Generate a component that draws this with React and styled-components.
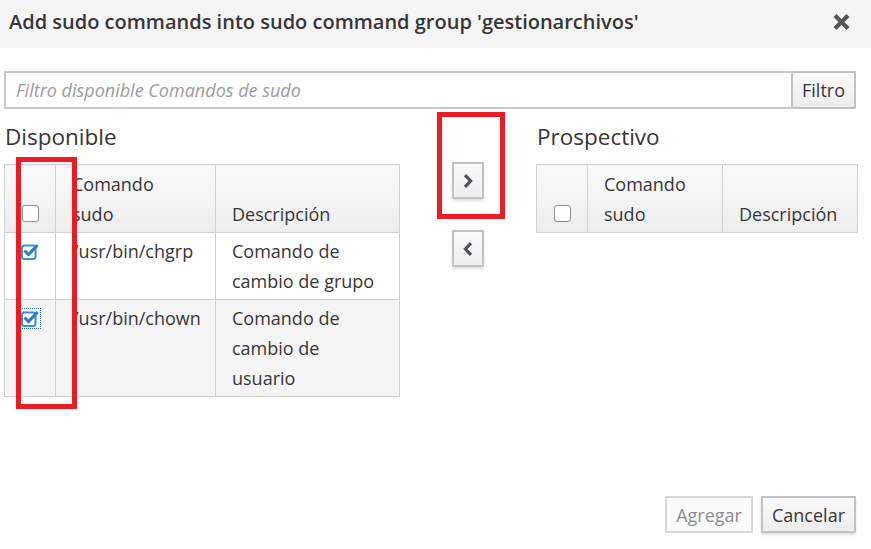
import React from "react";
import styled, { createGlobalStyle } from "styled-components";

const Global = createGlobalStyle`
  html, body { margin: 0; padding: 0; background: #fff; }
  body { font-family: "Open Sans", "Noto Sans", sans-serif; color: #363636; }
  * { box-sizing: border-box; }
`;

const Page = styled.div`
  position: relative;
  width: 871px;
  height: 549px;
  overflow: hidden;
`;

const Header = styled.div`
  height: 48px;
  background: #f5f5f5;
  display: flex;
  align-items: center;
  justify-content: space-between;
  padding: 0 20px 0 9px;
`;

const Title = styled.h4`
  margin: 0;
  font-size: 20px;
  font-weight: 600;
  color: #363636;
  line-height: 26px;
  margin-top: -4px;
`;

const Close = styled.button`
  border: 0;
  background: none;
  padding: 0;
  width: 19px;
  height: 18px;
  display: flex;
  margin-top: -4px;
  cursor: pointer;
`;

const Body = styled.div`
  padding: 23px 15px 0 4px;
`;

const FilterRow = styled.div`
  display: flex;
  height: 38px;
`;

const FilterInput = styled.input`
  flex: 1;
  height: 38px;
  border: 2px solid #c8c8c8;
  border-right: 0;
  padding: 0 10px;
  font-family: inherit;
  font-size: 18px;
  color: #363636;
  outline: none;
  &::placeholder { color: #9c9c9c; font-style: italic; }
`;

const Button = styled.button`
  height: ${(p) => p.$h || 38}px;
  width: ${(p) => (p.$w ? `${p.$w}px` : "auto")};
  padding: 0 ${(p) => p.$px ?? 9}px;
  font-family: inherit;
  font-size: 18px;
  color: ${(p) => (p.disabled ? "#8b8d8f" : "#363636")};
  background: ${(p) =>
    p.disabled ? "#fafafa" : "linear-gradient(#fafafa, #ededed)"};
  border: 2px solid ${(p) => (p.disabled ? "#d8d8d8" : "#c2c2c2")};
  border-radius: 1px;
  box-shadow: ${(p) => (p.$shadow && !p.disabled ? "0 2px 3px rgba(0,0,0,0.12)" : "none")};
  display: inline-flex;
  align-items: center;
  justify-content: center;
  cursor: pointer;
`;

const Panels = styled.div`
  display: grid;
  grid-template-columns: 395px 137px 321px;
`;

const PanelTitle = styled.h2`
  margin: 11px 0 11px 1px;
  font-size: 22.5px;
  font-weight: 400;
  line-height: 33px;
  color: #363636;
`;

const Middle = styled.div`
  display: flex;
  flex-direction: column;
  align-items: center;
  padding-top: 53px;
  gap: 31px;
`;

const Table = styled.table`
  width: 100%;
  border-collapse: collapse;
  font-size: 18px;
  line-height: 30px;
  table-layout: fixed;
`;

const Th = styled.th`
  background: linear-gradient(#fafafa, #ededed);
  border: 1px solid #d1d1d1;
  text-align: left;
  font-weight: 400;
  padding: ${(p) => (p.$check ? "4px 0 3px" : "4px 16px 3px")};
  vertical-align: bottom;
  width: ${(p) => p.$w}px;
`;

const Td = styled.td`
  border: 1px solid #d1d1d1;
  padding: ${(p) => (p.$check ? "3px 0" : "3px 16px")};
  vertical-align: top;
  background: ${(p) => (p.$alt ? "#f5f5f5" : "#fff")};
`;

const CheckCell = styled.div`
  display: flex;
  justify-content: center;
  margin: ${(p) => (p.$head ? "0 0 7px" : "7px 0 0")};
`;

const EmptyBox = styled.span`
  display: block;
  width: 17px;
  height: 17px;
  border: 1.5px solid #8b8d8f;
  border-radius: 3px;
  background: #fff;
`;

const Focus = styled.span`
  display: block;
  outline: ${(p) => (p.$focus ? "1px dotted #2a6fb0" : "none")};
  outline-offset: 1px;
  line-height: 0;
`;

const Footer = styled.div`
  position: absolute;
  right: 15px;
  top: 496px;
  display: flex;
  gap: 8px;
`;

const Annot = styled.div`
  position: absolute;
  border: 5px solid #ed1c24;
  left: ${(p) => p.$x}px;
  top: ${(p) => p.$y}px;
  width: ${(p) => p.$w}px;
  height: ${(p) => p.$h}px;
  pointer-events: none;
`;

const CheckedIcon = ({ focus }) => (
  <Focus $focus={focus}>
    <svg width="18" height="17" viewBox="0 0 18 17">
      <rect x="1" y="2.5" width="13.5" height="13.5" rx="2.5" fill="#fff" stroke="#3d8fd1" strokeWidth="2" />
      <path d="M4.5 8.5 L7.5 11.5 L15.5 3.2" fill="none" stroke="#2b7bbf" strokeWidth="3" strokeLinecap="square" />
    </svg>
  </Focus>
);

const Chevron = ({ dir }) => (
  <svg width="12" height="16" viewBox="0 0 12 16">
    <path
      d={dir === "right" ? "M3 2.2 L8.6 8 L3 13.8" : "M9 2.2 L3.4 8 L9 13.8"}
      fill="none"
      stroke="#4d5258"
      strokeWidth="3.2"
    />
  </svg>
);

const XIcon = () => (
  <svg width="19" height="18" viewBox="0 0 19 18">
    <path d="M3 2.5 L16 15.5 M16 2.5 L3 15.5" stroke="#555" strokeWidth="4.2" strokeLinecap="butt" />
  </svg>
);

const DataTable = ({ widths, rows }) => (
  <Table>
    <thead>
      <tr>
        <Th $w={widths[0]} $check>
          <CheckCell $head>
            <EmptyBox />
          </CheckCell>
        </Th>
        <Th $w={widths[1]}>
          Comando
          <br />
          sudo
        </Th>
        <Th $w={widths[2]}>Descripción</Th>
      </tr>
    </thead>
    {rows.length > 0 && (
      <tbody>
        {rows.map((r, i) => (
          <tr key={r.cmd}>
            <Td $alt={i % 2 === 1} $check>
              <CheckCell>
                <CheckedIcon focus={i === 1} />
              </CheckCell>
            </Td>
            <Td $alt={i % 2 === 1}>{r.cmd}</Td>
            <Td $alt={i % 2 === 1}>{r.desc}</Td>
          </tr>
        ))}
      </tbody>
    )}
  </Table>
);

export default function App() {
  const rows = [
    { cmd: "/usr/bin/chgrp", desc: "Comando de cambio de grupo" },
    { cmd: "/usr/bin/chown", desc: "Comando de cambio de usuario" },
  ];
  return (
    <Page>
      <Global />
      <Header>
        <Title>Add sudo commands into sudo command group 'gestionarchivos'</Title>
        <Close aria-label="Close">
          <XIcon />
        </Close>
      </Header>
      <Body>
        <FilterRow>
          <FilterInput placeholder="Filtro disponible Comandos de sudo" />
          <Button>Filtro</Button>
        </FilterRow>
        <Panels>
          <div>
            <PanelTitle>Disponible</PanelTitle>
            <DataTable widths={[51, 160, 184]} rows={rows} />
          </div>
          <Middle>
            <Button $h={37} $w={32} $px={0} $shadow aria-label="Agregar a prospectivo">
              <Chevron dir="right" />
            </Button>
            <Button $h={37} $w={32} $px={0} $shadow aria-label="Quitar de prospectivo">
              <Chevron dir="left" />
            </Button>
          </Middle>
          <div>
            <PanelTitle>Prospectivo</PanelTitle>
            <DataTable widths={[51, 135, 135]} rows={[]} />
          </div>
        </Panels>
      </Body>
      <Footer>
        <Button disabled $h={37}>Agregar</Button>
        <Button $h={37} $shadow>Cancelar</Button>
      </Footer>
      <Annot $x={16} $y={157} $w={61} $h={252} />
      <Annot $x={437} $y={112} $w={68} $h={107} />
    </Page>
  );
}
